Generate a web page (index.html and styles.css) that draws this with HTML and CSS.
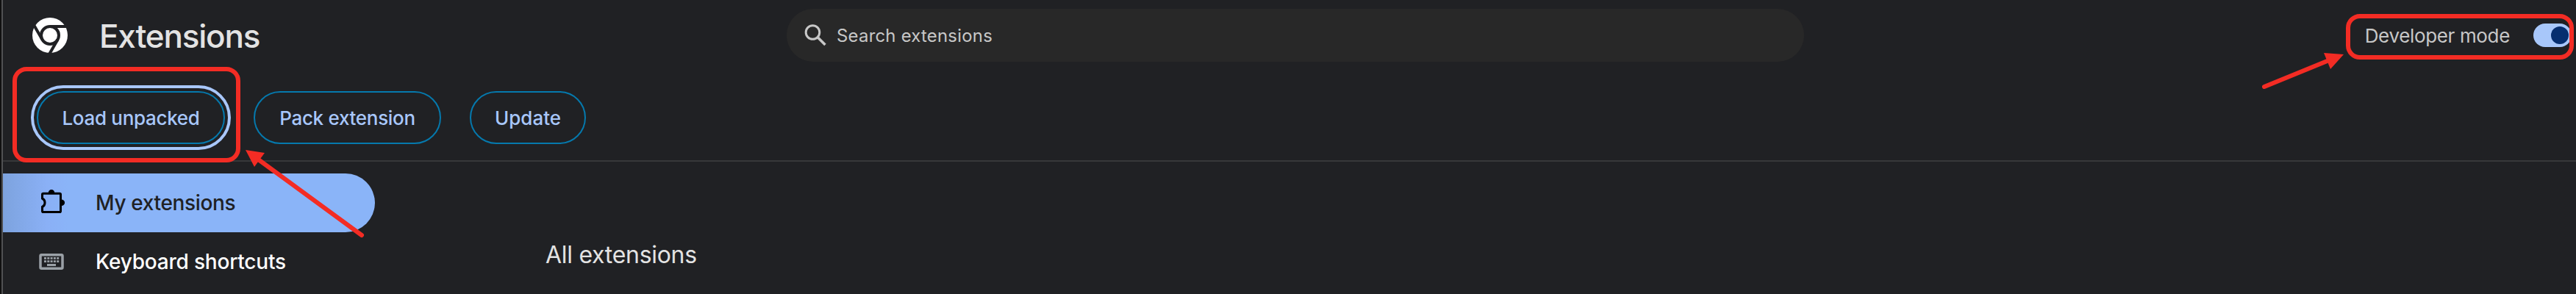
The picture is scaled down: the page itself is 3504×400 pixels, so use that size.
FILE: index.html
```html
<!DOCTYPE html>
<html lang="en">
<head>
<meta charset="utf-8">
<title>Extensions</title>
<link rel="stylesheet" href="styles.css">
</head>
<body>
<div class="page">
  <header class="toolbar">
    <div class="brand">
      <svg class="logo" viewBox="0 0 48 48">
        <circle cx="24" cy="24" r="24" fill="#fff"/>
        <g fill="none" stroke="#202124" stroke-width="4">
          <circle cx="24" cy="24" r="12"/>
          <path d="M24 12H48M13.600 30L1.600 9.200M34.400 30L22.400 50.800"/>
        </g>
      </svg>
      <h1 class="title">Extensions</h1>
    </div>
    <div class="search">
      <svg class="search-icon" viewBox="0 0 30 30" fill="none" stroke="#c7c7c7" stroke-width="3"><circle cx="11.500" cy="11" r="9.300"/><path d="M18 17.500L28.500 28" stroke-width="3.600"/></svg>
      <span class="search-text">Search extensions</span>
    </div>
    <div class="dev"><span class="dev-label">Developer mode</span><span class="toggle"><span class="knob"></span></span></div>
  </header>
  <div class="actions">
    <button class="btn load focused">Load unpacked</button>
    <button class="btn pack">Pack extension</button>
    <button class="btn update">Update</button>
  </div>
  <div class="content">
    <nav class="sidebar">
      <a class="item selected">
        <svg class="nav-icon" viewBox="0 0 36 36"><path d="M5.500 6.500Q5.500 5.200 6.800 5.200H29.200Q30.500 5.200 30.500 6.500V29.200Q30.500 30.500 29.200 30.500H6.800Q5.500 30.500 5.500 29.200V23.500C10.200 21.500 10.200 14 5.500 12Z" fill="none" stroke="#000" stroke-width="3"/><path d="M13.700 4.500a4.300 4.600 0 0 1 8.600 0zM31.500 13.400a4.600 4.300 0 0 1 0 8.600z" fill="#000"/></svg>
        <span class="my-text">My extensions</span>
      </a>
      <a class="item">
        <svg class="nav-icon" viewBox="0 0 36 36"><rect x="3" y="8.800" width="30" height="18.500" rx="1.500" fill="none" stroke="#9aa0a6" stroke-width="3.500"/><path d="M8 13.300H28.200M8 17.700H28.200" stroke="#9aa0a6" stroke-width="2.700" stroke-dasharray="3 1.300"/><path d="M12 22.500H24" stroke="#9aa0a6" stroke-width="3"/></svg>
        <span class="key-text">Keyboard shortcuts</span>
      </a>
    </nav>
    <main class="main"><h2 class="heading">All extensions</h2></main>
  </div>
  <div class="edge"></div>
  <svg class="marks" viewBox="0 0 3504 400">
    <g fill="none" stroke="#f32c24" stroke-width="6" stroke-linecap="round">
      <rect x="20" y="94" width="304" height="124" rx="16"/>
      <rect x="3194" y="22" width="304" height="56" rx="16"/>
      <path d="M492 320L350 216M3080 118L3168 82"/>
    </g>
    <path d="M334 204L360 208L346 227ZM3188 74L3161 72L3170 94Z" fill="#f32c24"/>
  </svg>
</div>
</body>
</html>
```
FILE: styles.css
```css
* { box-sizing: border-box; }
body { margin: 0; background: #202124; font-family: Inter, "Liberation Sans", sans-serif; }
.page { position: relative; width: 3504px; height: 400px; overflow: hidden; color: #e3e3e3; }
.toolbar { height: 96px; display: flex; align-items: center; padding-left: 44px; }
.brand { display: flex; align-items: center; width: 1026px; }
.logo { width: 48px; height: 48px; margin-right: 43px; }
.title { margin: 0; padding-top: 2px; font-size: 44px; font-weight: 500; line-height: 60px; letter-spacing: -1.2px; white-space: nowrap; }
.search { width: 1384px; height: 72px; border-radius: 36px; background: #282828; display: flex; align-items: center; padding-left: 24px; }
.search-icon { width: 30px; height: 30px; margin-right: 14px; }
.search-text { font-size: 24px; letter-spacing: 0.18px; color: #c7c7c7; }
.dev { margin-left: auto; margin-right: 6px; display: flex; align-items: center; color: #c7c7c7; font-size: 26px; letter-spacing: -0.35px; }
.toggle { width: 52px; height: 32px; border-radius: 16px; background: #a8c7fa; margin-left: 32px; padding: 4px; display: flex; justify-content: flex-end; }
.knob { width: 24px; height: 24px; border-radius: 50%; background: #062e6f; }
.actions { height: 124px; border-bottom: 2px solid #37383a; display: flex; align-items: flex-start; padding: 28px 0 0 50px; }
.btn { height: 72px; border: 2px solid #0579ad; border-radius: 36px; background: transparent; color: #a8c7fa; font: 500 26px Inter, sans-serif; letter-spacing: -0.3px; padding: 0; white-space: nowrap; }
.focused { outline: 4px solid #a8c7fa; outline-offset: 4px; }
.load { width: 256px; margin-right: 39px; }
.pack { width: 255px; margin-right: 39px; }
.update { width: 158px; letter-spacing: 0; }
.content { display: flex; }
.sidebar { width: 700px; padding: 16px 0 0 4px; }
.item { width: 506px; height: 80px; border-radius: 0 40px 40px 0; display: flex; align-items: center; padding-left: 48px; color: #fff; font-size: 28px; font-weight: 500; }
.selected { color: #202124; background: linear-gradient(90deg, #7da3de, #8ab0f6 60px, #8ab4f8 90px); }
.my-text { letter-spacing: -0.35px; }
.key-text { letter-spacing: -0.2px; }
.nav-icon { width: 36px; height: 36px; margin-right: 42px; }
.main { padding: 105px 0 0 42px; }
.heading { margin: 0; font-size: 32px; font-weight: 400; line-height: 44px; letter-spacing: -0.3px; white-space: nowrap; }
.edge { position: absolute; left: 0; top: 0; width: 4px; height: 400px; background: linear-gradient(90deg, #111 0 2px, #505153 2px); }
.marks { position: absolute; inset: 0; width: 3504px; height: 400px; }
```
